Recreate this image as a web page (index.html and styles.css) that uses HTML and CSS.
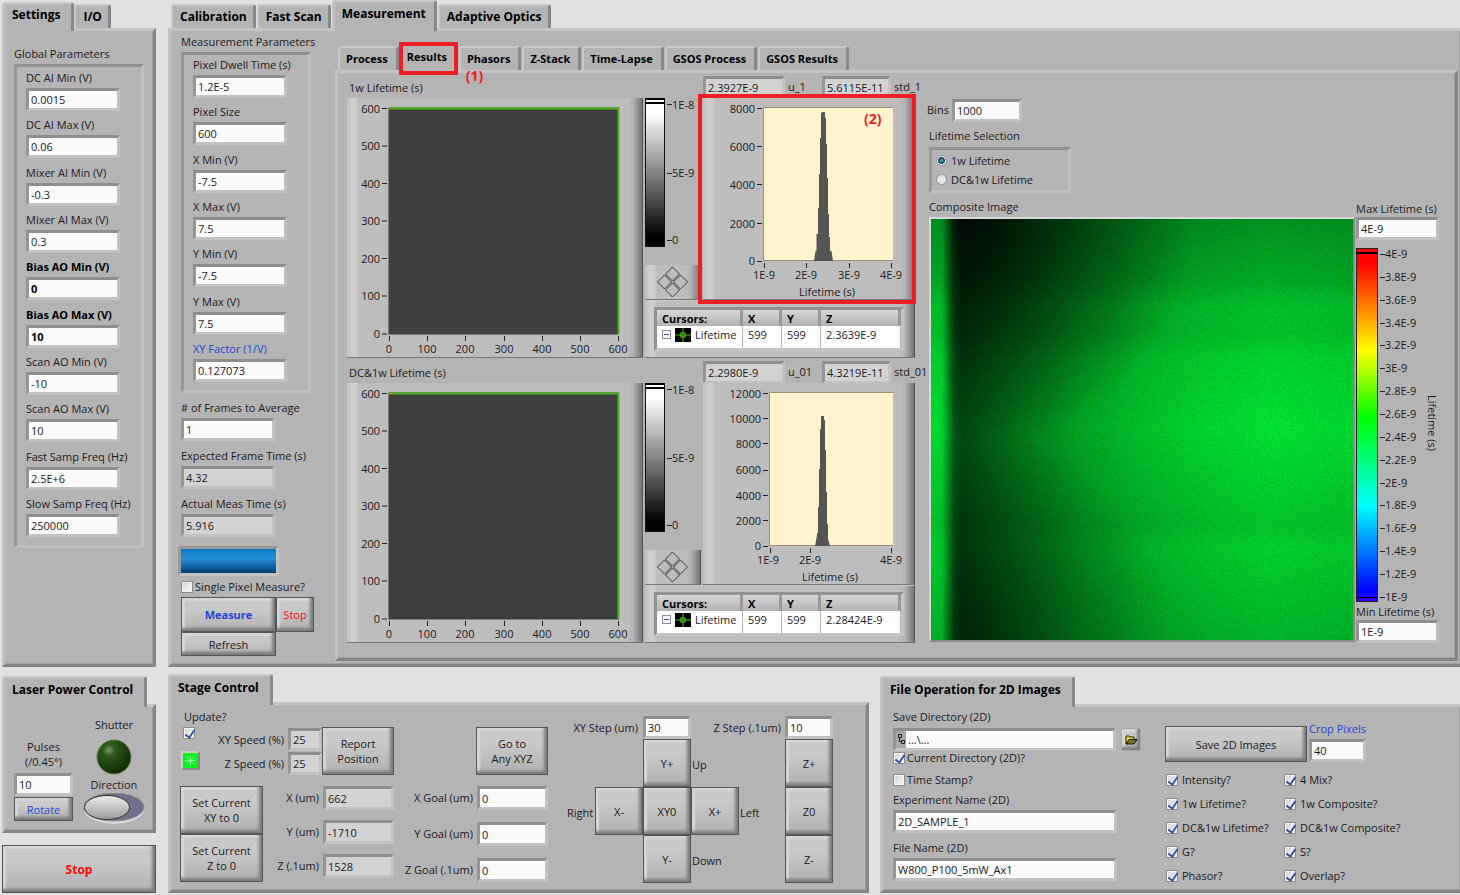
FILE: index.html
```html
<!DOCTYPE html>
<html lang="en">
<head>
<meta charset="utf-8">
<title>Lifetime Imaging Control</title>
<link rel="stylesheet" href="styles.css">
</head>
<body>
<svg class="defs" aria-hidden="true">
  <defs>
    <linearGradient id="gray" x1="0" y1="0" x2="0" y2="1"><stop offset="0" stop-color="#fff"/><stop offset=".1" stop-color="#fff"/><stop offset=".93" stop-color="#000"/></linearGradient>
    <linearGradient id="rainbow" x1="0" y1="0" x2="0" y2="1"><stop offset=".04" stop-color="#f00"/><stop offset=".29" stop-color="#ff0"/><stop offset=".477" stop-color="#0f0"/><stop offset=".73" stop-color="#0ff"/><stop offset=".97" stop-color="#00f"/><stop offset="1" stop-color="#40f"/></linearGradient>
    <g id="cursor-mark"><rect width="16" height="14" fill="#000"/><path d="M8 0V14M0 7H16" stroke="#4cc417" stroke-width="1"/><path d="M5 4.500L11 9.500M11 4.500L5 9.500" stroke="#3a8a10"/><circle cx="8" cy="7" r="2.500" fill="none" stroke="#4cc417"/></g>
    <g id="mover" fill="none" stroke="#3c3c3c"><path d="M15.500 1L22.500 8L15.500 15L8.500 8ZM15.500 17L22.500 24L15.500 31L8.500 24ZM7.500 9L14.500 16L7.500 23L.500 16ZM23.500 9L30.500 16L23.500 23L16.500 16Z"/></g>
  </defs>
</svg>
<main class="app">

  <section class="tabset settings">
    <div class="tabs" role="tablist">
      <button class="tab active" role="tab">Settings</button>
      <button class="tab" role="tab">I/O</button>
    </div>
    <div class="panel">
      <h3>Global Parameters</h3>
      <div class="group global">
        <label class="field"><span>DC AI Min (V)</span><input value="0.0015"></label>
        <label class="field"><span>DC AI Max (V)</span><input value="0.06"></label>
        <label class="field"><span>Mixer AI Min (V)</span><input value="-0.3"></label>
        <label class="field"><span>Mixer AI Max (V)</span><input value="0.3"></label>
        <label class="field strong"><span>Bias AO Min (V)</span><input value="0"></label>
        <label class="field strong"><span>Bias AO Max (V)</span><input value="10"></label>
        <label class="field"><span>Scan AO Min (V)</span><input value="-10"></label>
        <label class="field"><span>Scan AO Max (V)</span><input value="10"></label>
        <label class="field"><span>Fast Samp Freq (Hz)</span><input value="2.5E+6"></label>
        <label class="field"><span>Slow Samp Freq (Hz)</span><input value="250000"></label>
      </div>
    </div>
  </section>

  <section class="tabset measurement">
    <div class="tabs" role="tablist">
      <button class="tab" role="tab">Calibration</button>
      <button class="tab" role="tab">Fast Scan</button>
      <button class="tab active" role="tab">Measurement</button>
      <button class="tab" role="tab">Adaptive Optics</button>
    </div>
    <div class="panel open-right measure-body">
      <div class="params">
        <h3>Measurement Parameters</h3>
        <div class="group scan">
          <label class="field"><span>Pixel Dwell Time (s)</span><input value="1.2E-5"></label>
          <label class="field"><span>Pixel Size</span><input value="600"></label>
          <label class="field"><span>X Min (V)</span><input value="-7.5"></label>
          <label class="field"><span>X Max (V)</span><input value="7.5"></label>
          <label class="field"><span>Y Min (V)</span><input value="-7.5"></label>
          <label class="field"><span>Y Max (V)</span><input value="7.5"></label>
          <label class="field"><span class="blue">XY Factor (1/V)</span><input value="0.127073"></label>
        </div>
        <div class="timing">
          <label class="field"><span># of Frames to Average</span><input value="1"></label>
          <label class="field"><span>Expected Frame Time (s)</span><input value="4.32" readonly></label>
          <label class="field"><span>Actual Meas Time (s)</span><input value="5.916" readonly></label>
        </div>
        <div class="progress" role="progressbar" aria-label="Progress"></div>
        <label class="check"><input type="checkbox">Single Pixel Measure?</label>
        <div class="run">
          <button class="btn blue bold">Measure</button>
          <button class="btn red">Stop</button>
          <button class="btn">Refresh</button>
        </div>
      </div>

      <div class="tabset results">
        <div class="tabs small" role="tablist">
          <button class="tab" role="tab">Process</button>
          <button class="tab active marked" role="tab">Results<span class="note">(1)</span></button>
          <button class="tab" role="tab">Phasors</button>
          <button class="tab" role="tab">Z-Stack</button>
          <button class="tab" role="tab">Time-Lapse</button>
          <button class="tab" role="tab">GSOS Process</button>
          <button class="tab" role="tab">GSOS Results</button>
        </div>
        <div class="panel results-body">
          <div class="blocks">
            <div class="block">
              <h3>1w Lifetime (s)</h3>
              <div class="stats">
                <input id="u1" class="wide" value="2.3927E-9" readonly><label for="u1">u_1</label>
                <input id="s1" value="5.6115E-11" readonly><label for="s1">std_1</label>
              </div>
              <div class="graph heat">
                <svg width="294" height="259" viewBox="0 0 294 259">
                  <rect x="42" y="9" width="230" height="227" fill="#404040"/>
                  <path d="M41.500 236.500V9.500H272M41.500 236.500H272" fill="none" stroke="#7d7d7d"/>
                  <path d="M42 10.500H271M271.500 10V236" stroke="#50b414" stroke-width="2" fill="none"/>
                  <path d="M35 10.500h5M35 48h5M35 85.500h5M35 123h5M35 160.500h5M35 198h5M35 236h5M42.500 238v5M80.500 238v5M118.500 238v5M157.500 238v5M195.500 238v5M233.500 238v5M271.500 238v5" stroke="#222"/>
                  <g class="end"><text x="33" y="15">600</text><text x="33" y="52">500</text><text x="33" y="90">400</text><text x="33" y="127">300</text><text x="33" y="165">200</text><text x="33" y="202">100</text><text x="33" y="240">0</text></g>
                  <g class="mid"><text x="42" y="255">0</text><text x="80" y="255">100</text><text x="118" y="255">200</text><text x="157" y="255">300</text><text x="195" y="255">400</text><text x="233" y="255">500</text><text x="271" y="255">600</text></g>
                </svg>
              </div>
              <svg class="ramp" width="56" height="150" viewBox="0 0 56 150">
                <rect x=".5" y=".5" width="19" height="148" fill="url(#gray)" stroke="#111"/><path d="M0 1H20M0 5H20" stroke="#000" stroke-width="2"/>
                <path d="M22 6.500h5M22 75.500h5M22 142.500h5" stroke="#222"/>
                <text x="27" y="11">1E-8</text><text x="27" y="79">5E-9</text><text x="27" y="146">0</text>
              </svg>
              <button class="graph mover" aria-label="Move cursor"><svg width="31" height="32" viewBox="0 0 31 32"><use href="#mover"/></svg></button>
              <div class="graph hist marked-graph">
                <svg width="210" height="201" viewBox="0 0 210 201">
                  <rect x="60" y="9" width="130" height="154" fill="#fff3ce"/><path d="M60.500 163V9.500H190M60 162.500H190" fill="none" stroke="#989078"/>
                  <path d="M111 163L112.500 153H113.500V136H115V110H116V76H117V40H118V15H119V14H122V20H123V46H124V80H125V116H126V139H127V153H128.500L130 163Z" fill="#555"/>
                  <path d="M54 10.500h5M54 48.500h5M54 86.500h5M54 125.500h5M54 163.500h5M61.500 165v5M103.500 165v5M146.500 165v5M188.500 165v5" stroke="#222"/>
                  <g class="end"><text x="52" y="15">8000</text><text x="52" y="53">6000</text><text x="52" y="91">4000</text><text x="52" y="130">2000</text><text x="52" y="167">0</text></g>
                  <g class="mid"><text x="61" y="181">1E-9</text><text x="103" y="181">2E-9</text><text x="146" y="181">3E-9</text><text x="188" y="181">4E-9</text><text x="124" y="198">Lifetime (s)</text></g>
                </svg>
                <span class="note inside">(2)</span>
              </div>
              <div class="graph cursors">
                <table>
                  <thead><tr><th>Cursors:</th><th>X</th><th>Y</th><th>Z</th></tr></thead>
                  <tbody><tr><td><span class="cursor-name"><i class="minus"></i><svg width="16" height="14"><use href="#cursor-mark"/></svg>Lifetime</span></td><td>599</td><td>599</td><td>2.3639E-9</td></tr></tbody>
                </table>
              </div>
            </div>

            <div class="block">
              <h3>DC&amp;1w Lifetime (s)</h3>
              <div class="stats">
                <input id="u2" class="wide" value="2.2980E-9" readonly><label for="u2">u_01</label>
                <input id="s2" value="4.3219E-11" readonly><label for="s2">std_01</label>
              </div>
              <div class="graph heat">
                <svg width="294" height="259" viewBox="0 0 294 259">
                  <rect x="42" y="9" width="230" height="227" fill="#3e3e3e"/>
                  <path d="M41.500 236.500V9.500H272M41.500 236.500H272" fill="none" stroke="#7d7d7d"/>
                  <path d="M42 10.500H271M271.500 10V236" stroke="#50b414" stroke-width="2" fill="none"/>
                  <path d="M35 10.500h5M35 48h5M35 85.500h5M35 123h5M35 160.500h5M35 198h5M35 236h5M42.500 238v5M80.500 238v5M118.500 238v5M157.500 238v5M195.500 238v5M233.500 238v5M271.500 238v5" stroke="#222"/>
                  <g class="end"><text x="33" y="15">600</text><text x="33" y="52">500</text><text x="33" y="90">400</text><text x="33" y="127">300</text><text x="33" y="165">200</text><text x="33" y="202">100</text><text x="33" y="240">0</text></g>
                  <g class="mid"><text x="42" y="255">0</text><text x="80" y="255">100</text><text x="118" y="255">200</text><text x="157" y="255">300</text><text x="195" y="255">400</text><text x="233" y="255">500</text><text x="271" y="255">600</text></g>
                </svg>
              </div>
              <svg class="ramp" width="56" height="150" viewBox="0 0 56 150">
                <rect x=".5" y=".5" width="19" height="148" fill="url(#gray)" stroke="#111"/><path d="M0 1H20M0 5H20" stroke="#000" stroke-width="2"/>
                <path d="M22 6.500h5M22 75.500h5M22 142.500h5" stroke="#222"/>
                <text x="27" y="11">1E-8</text><text x="27" y="79">5E-9</text><text x="27" y="146">0</text>
              </svg>
              <button class="graph mover" aria-label="Move cursor"><svg width="31" height="32" viewBox="0 0 31 32"><use href="#mover"/></svg></button>
              <div class="graph hist">
                <svg width="210" height="201" viewBox="0 0 210 201">
                  <rect x="66" y="9" width="124" height="154" fill="#fff3ce"/><path d="M66.500 163V9.500H190M66 162.500H190" fill="none" stroke="#989078"/>
                  <path d="M112 163L114 152V150H115V124H116V86H117V46H118V33H121V37H122V67H123V109H124V141H125V156L127 163Z" fill="#555"/>
                  <path d="M60 10.500h5M60 35.500h5M60 60.500h5M60 87.500h5M60 112.500h5M60 137.500h5M60 163.500h5M67.500 165v5M107.500 165v5M188.500 165v5" stroke="#222"/>
                  <g class="end"><text x="58" y="15">12000</text><text x="58" y="40">10000</text><text x="58" y="65">8000</text><text x="58" y="91">6000</text><text x="58" y="117">4000</text><text x="58" y="142">2000</text><text x="58" y="167">0</text></g>
                  <g class="mid"><text x="65" y="181">1E-9</text><text x="107" y="181">2E-9</text><text x="188" y="181">4E-9</text><text x="127" y="198">Lifetime (s)</text></g>
                </svg>
              </div>
              <div class="graph cursors">
                <table>
                  <thead><tr><th>Cursors:</th><th>X</th><th>Y</th><th>Z</th></tr></thead>
                  <tbody><tr><td><span class="cursor-name"><i class="minus"></i><svg width="16" height="14"><use href="#cursor-mark"/></svg>Lifetime</span></td><td>599</td><td>599</td><td>2.28424E-9</td></tr></tbody>
                </table>
              </div>
            </div>
          </div>

          <div class="composite">
            <label class="bins">Bins<input value="1000"></label>
            <fieldset>
              <legend>Lifetime Selection</legend>
              <div class="group radios">
                <label><input type="radio" name="sel" checked>1w Lifetime</label>
                <label><input type="radio" name="sel">DC&amp;1w Lifetime</label>
              </div>
            </fieldset>
            <div class="map">
              <h3>Composite Image</h3>
              <svg class="image" viewBox="0 0 422 422" preserveAspectRatio="none" role="img" aria-label="Composite lifetime image">
                <defs>
                  <linearGradient id="across"><stop offset="0" stop-color="#000" stop-opacity=".02"/><stop offset=".025" stop-color="#000" stop-opacity=".04"/><stop offset=".04" stop-color="#000" stop-opacity=".3"/><stop offset=".055" stop-color="#000" stop-opacity=".6"/><stop offset=".075" stop-color="#000" stop-opacity=".66"/><stop offset=".2" stop-color="#000" stop-opacity=".48"/><stop offset=".35" stop-color="#000" stop-opacity=".28"/><stop offset=".5" stop-color="#000" stop-opacity=".15"/><stop offset=".65" stop-color="#000" stop-opacity=".06"/><stop offset=".8" stop-color="#000" stop-opacity="0"/><stop offset="1" stop-color="#000" stop-opacity=".04"/></linearGradient>
                  <linearGradient id="down" x1="0" y1="0" x2="0" y2="1"><stop offset="0" stop-color="#000" stop-opacity=".35"/><stop offset=".15" stop-color="#000" stop-opacity=".24"/><stop offset=".21" stop-color="#000" stop-opacity=".14"/><stop offset=".27" stop-color="#000" stop-opacity=".14"/><stop offset=".33" stop-color="#000" stop-opacity=".06"/><stop offset=".5" stop-color="#000" stop-opacity="0"/><stop offset=".66" stop-color="#000" stop-opacity=".09"/><stop offset=".73" stop-color="#000" stop-opacity=".13"/><stop offset=".78" stop-color="#000" stop-opacity=".08"/><stop offset="1" stop-color="#000" stop-opacity=".2"/></linearGradient>
                  <radialGradient id="corner" cx=".07" cy="0" r=".55"><stop offset="0" stop-color="#000" stop-opacity=".8"/><stop offset="1" stop-color="#000" stop-opacity="0"/></radialGradient>
                  <radialGradient id="corner2" cx=".07" cy="1" r=".5"><stop offset="0" stop-color="#000" stop-opacity=".45"/><stop offset="1" stop-color="#000" stop-opacity="0"/></radialGradient>
                  <linearGradient id="fade"><stop offset=".03" stop-color="#000"/><stop offset=".07" stop-color="#fff"/></linearGradient>
                  <mask id="cell"><rect width="422" height="422" fill="url(#fade)"/></mask>
                  <filter id="grain" x="0" y="0" width="1" height="1" color-interpolation-filters="sRGB"><feTurbulence type="fractalNoise" baseFrequency=".75" numOctaves="2" seed="4"/><feColorMatrix values="0 0 0 0 0  0 0 0 0 0  0 0 0 0 0  .350 0 0 0 -.140"/></filter>
                </defs>
                <rect width="422" height="422" fill="#00e832"/>
                <rect width="422" height="422" fill="url(#across)"/>
                <rect width="422" height="422" fill="url(#down)"/>
                <g mask="url(#cell)"><rect width="422" height="422" fill="url(#corner)"/><rect width="422" height="422" fill="url(#corner2)"/></g>
                <rect width="422" height="422" filter="url(#grain)"/>
              </svg>
            </div>
            <div class="scale">
              <label class="field"><span>Max Lifetime (s)</span><input value="4E-9"></label>
              <svg class="ramp" width="84" height="356" viewBox="0 0 84 356">
                <rect x=".5" y=".5" width="21" height="353" fill="url(#rainbow)" stroke="#222"/><path d="M0 5H22" stroke="#000" stroke-width="2"/><path d="M0 349.500H22" stroke="#000"/>
                <path d="M24 6.500h5M24 29.500h5M24 52.500h5M24 75.500h5M24 97.500h5M24 120.500h5M24 143.500h5M24 166.500h5M24 189.500h5M24 212.500h5M24 235.500h5M24 257.500h5M24 280.500h5M24 303.500h5M24 326.500h5M24 349.500h5" stroke="#222"/>
                <text x="29" y="10">4E-9</text><text x="29" y="33">3.8E-9</text><text x="29" y="56">3.6E-9</text><text x="29" y="79">3.4E-9</text><text x="29" y="101">3.2E-9</text><text x="29" y="124">3E-9</text><text x="29" y="147">2.8E-9</text><text x="29" y="170">2.6E-9</text><text x="29" y="193">2.4E-9</text><text x="29" y="216">2.2E-9</text><text x="29" y="239">2E-9</text><text x="29" y="261">1.8E-9</text><text x="29" y="284">1.6E-9</text><text x="29" y="307">1.4E-9</text><text x="29" y="330">1.2E-9</text><text x="29" y="353">1E-9</text>
                <text class="turned" transform="translate(72 147) rotate(90)">Lifetime (s)</text>
              </svg>
              <label class="field"><span>Min Lifetime (s)</span><input value="1E-9"></label>
            </div>
          </div>
        </div>
      </div>
    </div>
  </section>

  <div class="left-bottom">
    <section class="tabset laser">
      <div class="tabs"><h2 class="tab active">Laser Power Control</h2></div>
      <div class="panel laser-body">
        <div class="pulses">
          <label for="pulses">Pulses<br>(/0.45°)</label>
          <input id="pulses" value="10">
          <button class="btn blue">Rotate</button>
        </div>
        <div class="shutter">
          <span>Shutter</span>
          <svg width="36" height="36" viewBox="0 0 36 36" role="img" aria-label="Shutter closed"><defs><radialGradient id="led" cx=".35" cy=".3" r=".7"><stop offset="0" stop-color="#7b9a6a"/><stop offset=".25" stop-color="#2f5a18"/><stop offset="1" stop-color="#102c02"/></radialGradient></defs><circle cx="18" cy="18" r="17" fill="url(#led)" stroke="#627a55"/></svg>
          <span>Direction</span>
          <button class="switch" aria-label="Direction"><svg width="62" height="32" viewBox="0 0 62 32"><defs><linearGradient id="knob" x1="0" y1="0" x2="0" y2="1"><stop offset="0" stop-color="#ececec"/><stop offset="1" stop-color="#9a9a9a"/></linearGradient></defs><ellipse cx="31" cy="16" rx="30" ry="15" fill="#d8d8d8"/><ellipse cx="31" cy="14" rx="30" ry="14" fill="#70708a" stroke="#909090"/><ellipse cx="24" cy="14.500" rx="22.500" ry="12" fill="url(#knob)" stroke="#333"/></svg></button>
        </div>
      </div>
    </section>
    <button class="btn red bold stop">Stop</button>
  </div>

  <div class="right-bottom">
    <section class="tabset stage">
      <div class="tabs"><h2 class="tab active">Stage Control</h2></div>
      <div class="panel stage-body">
        <div class="position">
          <div class="speeds">
            <div class="update">
              <label for="upd">Update?</label>
              <input id="upd" type="checkbox" checked>
              <svg width="19" height="19" viewBox="0 0 19 19"><rect width="19" height="19" fill="#888"/><path d="M0 19V0H19L17 2V17H2Z" fill="#ccc"/><rect x="2" y="2" width="15" height="15" fill="#00f81c"/><path d="M9.500 4V15M4 9.500H15M5.500 5.500L13.500 13.500M13.500 5.500L5.500 13.500" stroke="#8cff90"/></svg>
            </div>
            <div class="pairs">
              <label for="xys">XY Speed (%)</label><input id="xys" value="25" readonly>
              <label for="zs">Z Speed (%)</label><input id="zs" value="25" readonly>
            </div>
            <button class="btn tall">Report<br>Position</button>
          </div>
          <div class="current">
            <div class="stack"><button class="btn tall">Set Current<br>XY to 0</button><button class="btn tall">Set Current<br>Z to 0</button></div>
            <div class="readout">
              <label for="x">X (um)</label><input id="x" value="662" readonly>
              <label for="y">Y (um)</label><input id="y" value="-1710" readonly>
              <label for="z">Z (.1um)</label><input id="z" value="1528" readonly>
            </div>
          </div>
        </div>
        <div class="goals">
          <button class="btn tall">Go to<br>Any XYZ</button>
          <div class="readout">
            <label for="xg">X Goal (um)</label><input id="xg" value="0">
            <label for="yg">Y Goal (um)</label><input id="yg" value="0">
            <label for="zg">Z Goal (.1um)</label><input id="zg" value="0">
          </div>
        </div>
        <div class="jog">
          <label class="xy-label" for="xyst">XY Step (um)</label><input id="xyst" class="c3" value="30">
          <label class="z-label" for="zst">Z Step (.1um)</label><input id="zst" class="c6" value="10">
          <button class="btn c3">Y+</button><span class="c4">Up</span><button class="btn c6">Z+</button>
          <span class="c1">Right</span><button class="btn c2">X-</button><button class="btn c3">XY0</button><button class="btn c4">X+</button><span class="c5">Left</span><button class="btn c6">Z0</button>
          <button class="btn c3">Y-</button><span class="c4">Down</span><button class="btn c6">Z-</button>
        </div>
      </div>
    </section>

    <section class="tabset files">
      <div class="tabs"><h2 class="tab active">File Operation for 2D Images</h2></div>
      <div class="panel open-right files-body">
        <div class="names">
          <label for="dir">Save Directory (2D)</label>
          <div class="path">
            <div class="pathbox"><svg width="10" height="16" viewBox="0 0 10 16" fill="none" stroke="#222"><path d="M2.500 3.500h3v3h-3zM5.500 9.500h3v3h-3zM3.500 6.500v4h2"/></svg><input id="dir" value="...\..."></div>
            <button class="btn browse" aria-label="Browse"><svg width="13" height="10" viewBox="0 0 13 10"><path d="M1 9V1H4L5 2H9V4" fill="#e8e000" stroke="#222"/><path d="M1 9L4 4.500H12L9 9Z" fill="#77751c" stroke="#111"/></svg></button>
          </div>
          <label class="check"><input type="checkbox" checked>Current Directory (2D)?</label>
          <label class="check"><input type="checkbox">Time Stamp?</label>
          <label class="field"><span>Experiment Name (2D)</span><input value="2D_SAMPLE_1"></label>
          <label class="field"><span>File Name (2D)</span><input value="W800_P100_5mW_Ax1"></label>
        </div>
        <div class="save">
          <div class="save-row">
            <button class="btn">Save 2D Images</button>
            <label class="field"><span class="blue">Crop Pixels</span><input value="40"></label>
          </div>
          <div class="options">
            <label class="check"><input type="checkbox" checked>Intensity?</label><label class="check"><input type="checkbox" checked>4 Mix?</label>
            <label class="check"><input type="checkbox" checked>1w Lifetime?</label><label class="check"><input type="checkbox" checked>1w Composite?</label>
            <label class="check"><input type="checkbox" checked>DC&amp;1w Lifetime?</label><label class="check"><input type="checkbox" checked>DC&amp;1w Composite?</label>
            <label class="check"><input type="checkbox" checked>G?</label><label class="check"><input type="checkbox" checked>S?</label>
            <label class="check"><input type="checkbox" checked>Phasor?</label><label class="check"><input type="checkbox" checked>Overlap?</label>
          </div>
        </div>
      </div>
    </section>
  </div>
</main>
</body>
</html>
```
FILE: styles.css
```css
* { box-sizing: border-box; }
body {
  margin: 0;
  background: #e1e1e1;
  color: #1c1a1e;
  font: 11px/16px "Open Sans", "Noto Sans", sans-serif;
}
.defs { position: absolute; width: 0; height: 0; }
h2, h3 { margin: 0; font: inherit; }
svg { display: block; flex: none; }
svg text { font-size: 11px; fill: #1c1a1e; }
.end { text-anchor: end; }
.mid { text-anchor: middle; }
.blue { color: #1d47d8; }
.red { color: #f80808; }
.bold { font-weight: 700; }

/* Controls */
input { font: inherit; color: inherit; margin: 0; }
input:not([type]) {
  display: block;
  width: 94px;
  min-width: 0;
  height: 23px;
  padding: 0 2px;
  background: #fafafa;
  border: 3px solid;
  border-color: #8e8e8e #c2c2c2 #c2c2c2 #969696;
  border-radius: 0;
  outline: 0;
}
input[readonly]:not([type]) { background: #d2d2d2; }
input[type="checkbox"] {
  appearance: none;
  position: relative;
  flex: none;
  width: 12px;
  height: 12px;
  border: 1px solid #8c8c8c;
  background: linear-gradient(135deg, #cfd2d6, #fbfbfb);
  box-shadow: inset 0 0 0 1px #f4f4f4;
}
input[type="checkbox"]:checked::after {
  content: "";
  position: absolute;
  left: 3px;
  top: 0;
  width: 4px;
  height: 8px;
  border: solid #3c56a4;
  border-width: 0 2px 2px 0;
  transform: rotate(35deg);
}
input[type="radio"] {
  appearance: none;
  width: 11px;
  height: 11px;
  border: 1px solid #909090;
  border-radius: 50%;
  background: #e6e6e6;
}
input[type="radio"]:checked { background: radial-gradient(circle, #5aa5cf 0, #12405e 3px, #f0f0f0 4px); }
.btn {
  padding: 0;
  font: inherit;
  line-height: 15px;
  color: #1c1a1e;
  border: 1px solid #555;
  border-radius: 0;
  background: linear-gradient(#c6c6c6, #cacaca 30%, #b0b0b0);
  box-shadow: inset -3px -3px 3px #7c7c7c, inset 3px 3px 2px #d6d6d6;
}
.btn.blue { color: #1d47d8; }
.btn.red { color: #f80808; }
.btn.bold { font-weight: 700; }
.tall { height: 48px; }
.field { display: block; }
.field span { display: block; line-height: 16px; padding-bottom: 2px; white-space: nowrap; }
.strong { font-weight: 700; color: #000; }
.check { display: flex; align-items: center; gap: 2px; white-space: nowrap; }
.group {
  border: 3px solid;
  border-color: #909090 #c0c0c0 #c0c0c0 #989898;
}

/* Tabbed panels */
.tabset { display: flex; flex-direction: column; min-width: 0; }
.tabs { display: flex; align-items: flex-end; }
.tab {
  height: 24px;
  padding: 0 6px 1px 7px;
  font: 700 12px/20px "Open Sans", "Noto Sans", sans-serif;
  color: #000;
  white-space: nowrap;
  background: #b4b4b4;
  border: solid;
  border-width: 2px 3px 0 2px;
  border-color: #c9c9c9 #888 #c9c9c9 #c9c9c9;
  border-radius: 3px 3px 0 0;
}
.tab.active { position: relative; z-index: 1; height: 29px; margin-bottom: -3px; padding-bottom: 5px; border-left-width: 3px; border-left-color: #c2c2c2; }
.small .tab { font-size: 11px; }
.panel {
  flex: 1;
  min-width: 0;
  background: #b4b4b4;
  border: 3px solid;
  border-color: #c4c4c4 #858585 #858585 #c2c2c2;
  box-shadow: inset -1px -1px #a0a0a0;
}
.panel.open-right { border-right: 0; }

.app {
  display: grid;
  grid-template-columns: 154px minmax(0, 1fr);
  column-gap: 12px;
  row-gap: 8px;
  padding: 0 0 2px 2px;
}
.settings { padding-top: 2px; }
.settings .panel { padding: 15px 9px; }
.settings .tab.active { padding: 0 11px 5px 7px; }
.group.global { display: flex; flex-direction: column; justify-content: space-between; min-height: 484px; padding: 3px 0 8px 9px; margin-top: 2px; }
.measurement .tabs:not(.small) { height: 28px; padding-left: 3px; gap: 1px; }
.measurement .tabs:not(.small) .tab.active { height: 31px; padding-right: 8px; }
.settings .tabs { height: 26px; }

.measure-body { display: flex; padding: 0 2px 3px 10px; }
.params { width: 154px; padding-top: 3px; flex: none; }
.group.scan { display: flex; flex-direction: column; justify-content: space-between; width: 130px; min-height: 341px; padding: 2px 0 8px 9px; margin-top: 2px; }
.timing { display: flex; flex-direction: column; gap: 7px; padding-top: 7px; }
.progress { width: 101px; height: 30px; margin: 9px 0 3px -3px; border: 3px solid; border-color: #999 #c2c2c2 #c2c2c2 #999; background: linear-gradient(#0a78c4, #2490dc 40%, #003c70); }
.run { display: grid; grid-template-columns: 95px 38px; grid-template-rows: 35px 24px; margin-top: 2px; }

.results { flex: 1; padding-top: 13px; }
.results .tabs { gap: 1px; padding-left: 3px; height: 26px; }
.results .tab { padding: 0 8px 1px 6px; }
.results .tab.active { padding: 0 8px 6px 4px; }
.marked::after {
  content: "";
  position: absolute;
  inset: -4px -3px -2px -4px;
  border: 4px solid #ee1c25;
}
.note { position: absolute; z-index: 2; left: 63px; top: 20px; font: 700 14px/20px "Open Sans", sans-serif; color: #ee1c25; }
.note.inside { left: 161px; top: 11px; }
.results-body { display: flex; gap: 14px; padding: 1px 16px 14px 9px; }
.blocks { flex: none; }
.block {
  display: grid;
  grid-template-columns: 296px 56px 212px;
  grid-template-rows: 24px 167px 35px 59px;
  column-gap: 2px;
}
.block > h3 { grid-column: 1 / 3; padding: 6px 0 0 2px; }
.stats { display: flex; align-items: center; gap: 3px; padding-top: 2px; white-space: nowrap; width: 212px; }
.stats input { flex: none; }
.stats input:not([type]) { width: 69px; }
.stats input.wide:not([type]) { width: 82px; }
.stats label { flex: none; min-width: 31px; }
.graph {
  position: relative;
  padding: 0;
  border: solid;
  border-width: 0 1px 1px 0;
  border-color: #c8c8c8 #555 #777 #b6b6b6;
  background: linear-gradient(90deg, #c2c2c2, #d0d0d0 6px, #cacaca 10px, transparent 12px, transparent calc(100% - 14px), #b2b2b2 calc(100% - 9px), #747474), #bdbdbd;
}
.heat { grid-area: 2 / 1 / 5 / 2; height: 260px; }
.block > .ramp { grid-area: 2 / 2; }
.mover { grid-area: 3 / 2; display: grid; place-items: center; }
.hist { grid-area: 2 / 3 / 4 / 4; }
.marked-graph { z-index: 1; }
.marked-graph::after { content: ""; position: absolute; inset: -4px -2px -5px -5px; border: 4px solid #ee1c25; }
.cursors { grid-area: 4 / 2 / 5 / 4; height: 58px; padding: 6px 10px 6px 9px; border-top: 1px solid #c8c8c8; }
.cursors table { width: 100%; border: 3px solid; border-color: #929292 #c4c4c4 #c4c4c4 #929292; border-collapse: separate; border-spacing: 0; table-layout: fixed; background: #fff; }
.cursors th { height: 16px; padding: 0 0 0 5px; line-height: 15px; text-align: left; color: #000; background: linear-gradient(#d6d6d6, #b2b2b2); border-right: 3px solid #999; }
.cursors td { height: 22px; padding: 0 0 5px 5px; line-height: 16px; border-right: 1px solid #b4b4b4; }
.cursors th:nth-child(1) { width: 86px; }
.cursors th:nth-child(2), .cursors th:nth-child(3) { width: 39px; }
.cursor-name { display: flex; align-items: center; gap: 4px; }
.minus { width: 9px; height: 9px; border: 1px solid #8c8c9c; background: linear-gradient(#3a54a0, #3a54a0) center / 5px 1px no-repeat #f6f6f6; }

.composite { flex: 1; display: grid; grid-template-columns: minmax(0, 1fr) 84px; grid-template-rows: 50px 75px auto; align-content: start; min-width: 0; }
.bins { grid-column: 1 / 3; display: flex; align-items: center; gap: 3px; padding-top: 22px; margin-left: -2px; }
.bins input:not([type]) { width: 70px; }
fieldset { grid-column: 1 / 3; margin: 0; padding: 0; border: 0; }
legend { padding: 4px 0 3px; }
.radios { width: 142px; height: 46px; padding: 1px 4px; }
.radios label { display: flex; align-items: center; gap: 4px; height: 19px; }
.map h3 { height: 18px; line-height: 16px; }
.image { width: 100%; height: 425px; border: 2px solid; border-color: #d8d8d8 #8a8a8a #8a8a8a #d8d8d8; }
.scale { padding: 2px 0 0 1px; white-space: nowrap; }
.scale .field span { padding: 0; }
.scale input:not([type]) { width: 83px; }
.scale .ramp { margin: 8px 0 0; }

/* Laser */
.left-bottom { display: flex; flex-direction: column; gap: 12px; padding-top: 2px; }
.laser { flex: 1; }
.laser .tabs, .files .tabs { height: 27px; }
.laser .tab.active, .stage .tab.active, .files .tab.active { height: 31px; line-height: 23px; padding-right: 11px; }
.laser-body { display: flex; gap: 10px; padding: 10px 8px 3px 9px; }
.pulses { width: 59px; padding-top: 22px; text-align: center; line-height: 15px; }
.pulses input:not([type]) { width: 59px; margin-top: 4px; }
.pulses .btn { width: 59px; height: 24px; margin-top: 1px; }
.shutter { display: flex; flex-direction: column; align-items: center; width: 62px; }
.shutter > svg { margin: 6px 0 2px; }
.switch { padding: 0; border: 0; background: none; }
.stop { height: 48px; font-size: 12px; }

/* Stage */
.right-bottom { display: grid; grid-template-columns: 701px minmax(0, 1fr); column-gap: 11px; }
.stage .tabs { height: 27px; }
.stage-body { display: flex; padding: 3px 33px 7px 9px; }
.position { width: 214px; padding-top: 1px; }
.speeds { display: flex; align-items: flex-end; justify-content: space-between; height: 66px; }
.update { width: 24px; padding-left: 3px; }
.update label { display: block; white-space: nowrap; padding-left: 1px; }
.update input { display: block; margin: 2px 0 12px; }
.update svg { margin: 0 0 5px -2px; }
.pairs { flex: 1; display: grid; grid-template-columns: 1fr 34px; gap: 1px 4px; align-items: center; text-align: right; white-space: nowrap; }
.pairs input:not([type]) { width: 34px; }
.speeds .tall { width: 72px; }
.current { display: flex; gap: 12px; margin-top: 11px; }
.stack { display: grid; width: 83px; flex: none; }
.readout { display: grid; grid-template-columns: 1fr 71px; gap: 10px 4px; align-items: center; align-content: start; text-align: right; white-space: nowrap; }
.current .readout { flex: 1; }
.readout input:not([type]) { width: 71px; height: 24px; }
.goals { width: 154px; padding-top: 19px; display: flex; flex-direction: column; align-items: flex-end; gap: 11px; }
.goals .btn { width: 72px; }
.goals .readout { gap: 12px 4px; }
.jog {
  display: grid;
  grid-template-columns: 29px 48px 48px 48px 1fr 48px;
  grid-template-rows: 23px 48px 48px 48px;
  flex: 1;
  margin-left: 18px;
  padding-top: 8px;
  align-items: center;
  white-space: nowrap;
}
.jog .btn { height: 48px; }
.jog input:not([type]) { width: 48px; }
.jog .c1 { grid-column: 1; }
.jog .c2 { grid-column: 2; }
.jog .c3 { grid-column: 3; }
.jog .c4 { grid-column: 4; }
.jog .c5 { grid-column: 5; }
.jog .c6 { grid-column: 6; }
.jog span { padding: 4px 0 0 1px; }
.xy-label { grid-column: 1 / 3; text-align: right; padding-right: 5px; }
.z-label { grid-column: 4 / 6; text-align: right; padding-right: 4px; }

/* Files */
.files { padding-top: 2px; }
.files-body { display: flex; gap: 24px; padding: 2px 22px 2px 10px; }
.names { width: 248px; }
.names > label { display: flex; height: 16px; }
.names > .check { height: 13px; margin-bottom: 9px; }
.names > .check + .check { margin-bottom: 6px; }
.names > .field { display: block; height: 41px; margin-bottom: 7px; }
.names > .field:last-child { margin-bottom: 0; }
.names > .field input { width: 224px; }
.path { display: flex; gap: 5px; margin-top: 3px; }
.pathbox { display: flex; width: 224px; height: 23px; background: #a8a8a8; border: 3px solid; border-color: #8e8e8e #c2c2c2 #c2c2c2 #969696; }
.pathbox input:not([type]) { flex: 1; height: 17px; border: 0; }
.browse { width: 20px; display: grid; place-items: center; border-color: #aaa; }
.save { flex: 1; }
.save-row { display: flex; gap: 2px; align-items: flex-end; height: 53px; }
.save-row .btn { width: 142px; height: 36px; }
.save-row .field input { width: 57px; }
.options { display: grid; grid-template-columns: 118px auto; grid-auto-rows: 24px; justify-content: start; padding: 6px 0 0 1px; }
.options .check { gap: 4px; }
```
